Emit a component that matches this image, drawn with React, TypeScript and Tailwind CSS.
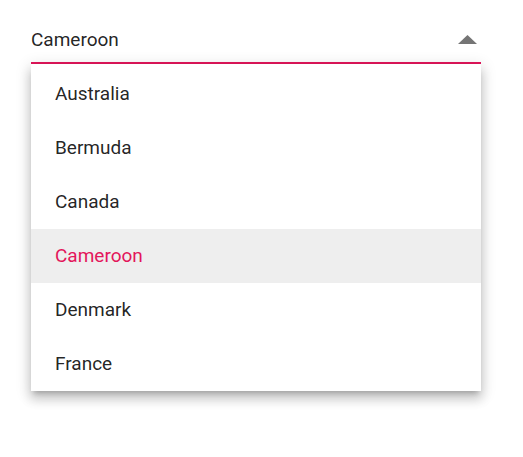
import React from "react";

const items = ["Australia", "Bermuda", "Canada", "Cameroon", "Denmark", "France"];

export default function App() {
  return (
    <div
      className="w-[523px] h-[457px] bg-white px-[31px] pt-[25px]"
      style={{ fontFamily: "Roboto, 'Liberation Sans', sans-serif" }}
    >
      <div className="w-[450px]">
        <div className="flex items-center justify-between pb-[8px] border-b-2 border-[#e3165b]">
          <span className="text-[19px] leading-[29px] text-[rgba(0,0,0,0.87)]">Cameroon</span>
          <svg width="19" height="9" viewBox="0 0 19 9" className="mr-[4px]">
            <path d="M0 9 L9.5 0 L19 9 Z" fill="#757575" />
          </svg>
        </div>
        <div className="bg-white pt-[3px] shadow-[0_5px_5px_-3px_rgba(0,0,0,0.2),0_8px_10px_1px_rgba(0,0,0,0.14),0_3px_14px_2px_rgba(0,0,0,0.12)]">
          {items.map((it) => (
            <div
              key={it}
              className={
                "h-[54px] flex items-center pl-[24px] text-[19px] " +
                (it === "Cameroon" ? "bg-[#eeeeee] text-[#e3165b]" : "text-[rgba(0,0,0,0.87)]")
              }
            >
              {it}
            </div>
          ))}
        </div>
      </div>
    </div>
  );
}
